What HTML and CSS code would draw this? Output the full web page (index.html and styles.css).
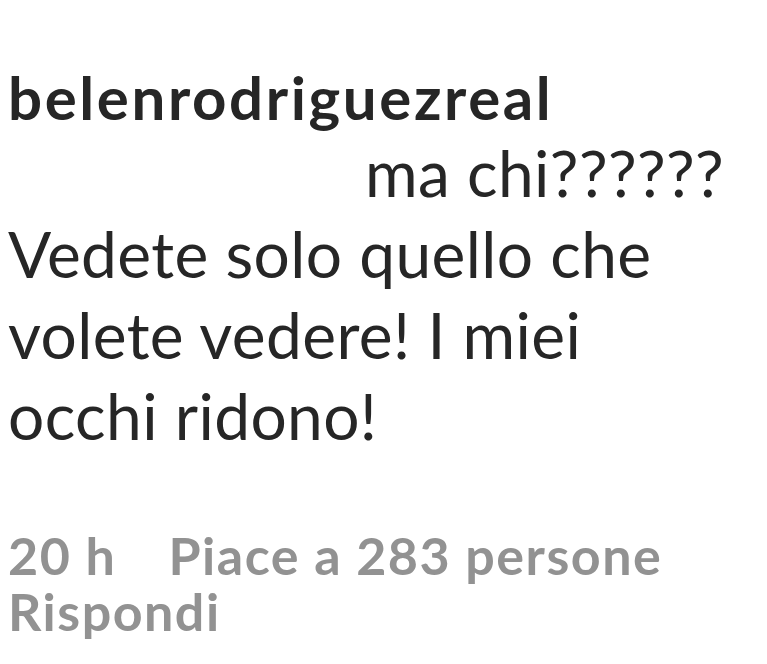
FILE: index.html
```html
<!DOCTYPE html>
<html lang="it">
<head>
  <meta charset="UTF-8">
  <title>Commento</title>
  <link rel="stylesheet" href="styles.css">
</head>
<body>

<div class="comment">
  <div class="user">belenrodriguezreal</div>
  <div class="text">
    <div class="first">ma chi??????</div>
    Vedete solo quello che volete vedere! I miei occhi ridono!
  </div>
  <div class="meta meta-top">
    <span class="time">20 h</span>
    <span class="likes">Piace a 283 persone</span>
  </div>
  <div class="meta">Rispondi</div>
</div>

</body>
</html>
```

FILE: styles.css
```css
body { margin: 0; background: #fff; }
.comment { font-family: Lato, "Open Sans", sans-serif; color: #262626; padding: 62px 8px 0; }
.user { font-weight: 700; font-size: 60px; line-height: 70px; letter-spacing: 2.6px; }
.text { font-size: 64px; line-height: 81px; width: 700px; letter-spacing: 0.4px; }
.first { padding-left: 357px; white-space: nowrap; }
.meta { font-size: 52px; line-height: 56px; color: #929292; font-weight: 700; letter-spacing: 1.5px; }
.meta-top { margin-top: 71px; }
.time { margin-right: 38px; }
```
